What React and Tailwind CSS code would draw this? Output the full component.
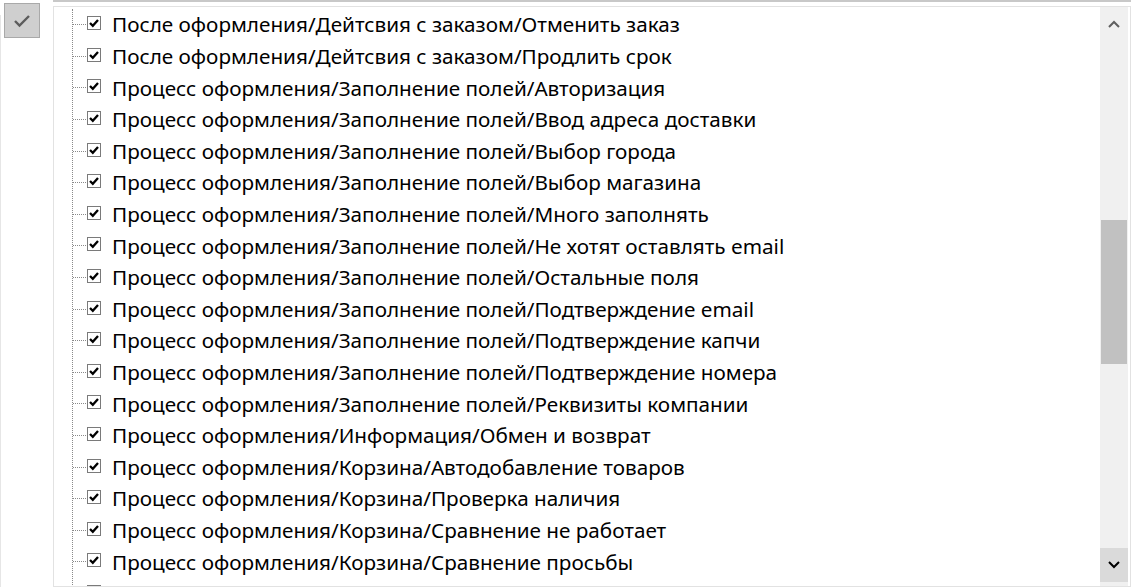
import React from "react";

const rows = [
  "После оформления/Дейтсвия с заказом/Отменить заказ",
  "После оформления/Дейтсвия с заказом/Продлить срок",
  "Процесс оформления/Заполнение полей/Авторизация",
  "Процесс оформления/Заполнение полей/Ввод адреса доставки",
  "Процесс оформления/Заполнение полей/Выбор города",
  "Процесс оформления/Заполнение полей/Выбор магазина",
  "Процесс оформления/Заполнение полей/Много заполнять",
  "Процесс оформления/Заполнение полей/Не хотят оставлять email",
  "Процесс оформления/Заполнение полей/Остальные поля",
  "Процесс оформления/Заполнение полей/Подтверждение email",
  "Процесс оформления/Заполнение полей/Подтверждение капчи",
  "Процесс оформления/Заполнение полей/Подтверждение номера",
  "Процесс оформления/Заполнение полей/Реквизиты компании",
  "Процесс оформления/Информация/Обмен и возврат",
  "Процесс оформления/Корзина/Автодобавление товаров",
  "Процесс оформления/Корзина/Проверка наличия",
  "Процесс оформления/Корзина/Сравнение не работает",
  "Процесс оформления/Корзина/Сравнение просьбы",
  "",
];

const CheckBox = ({ checked }) => (
  <div className="w-[14px] h-[14px] border border-[#7a7a7a] bg-white flex items-center justify-center shrink-0">
    {checked && (
      <svg width="10" height="10" viewBox="0 0 10 10">
        <path d="M1 5 L3.8 7.8 L9 2" fill="none" stroke="#000" strokeWidth="2.3" />
      </svg>
    )}
  </div>
);

const Row = ({ text, checked }) => (
  <div className="h-[31.6px] flex items-center shrink-0">
    <div className="w-[13px] border-t border-dotted border-[#8a8a8a] shrink-0" />
    <div className="ml-[1px] -mt-[3px]">
      <CheckBox checked={checked} />
    </div>
    <span className="ml-[11px] whitespace-nowrap text-[20.7px] text-black leading-none">{text}</span>
  </div>
);

export default function App() {
  return (
    <div
      className="w-[1140px] h-[587px] overflow-hidden bg-white flex"
      style={{ fontFamily: '"Noto Sans", "Liberation Sans", sans-serif' }}
    >
      {/* left toolbar */}
      <div className="w-[53px] shrink-0 flex">
        <div className="w-[1px] mt-[15px] bg-[#e6e6e6]" />
        <div className="ml-[3px] mt-[3px] w-[36px] h-[35px] bg-[#cfcfcf] border border-[#a9a9a9] flex items-center justify-center">
          <svg width="18" height="14" viewBox="0 0 18 14">
            <path d="M2 7 L6.5 11.5 L16 2" fill="none" stroke="#5c5c5c" strokeWidth="2.4" />
          </svg>
        </div>
      </div>

      {/* main panel */}
      <div className="w-[1078px] shrink-0 flex flex-col">
        <div className="h-[2px] bg-[#c8c8c8] shrink-0" />
        <div className="h-[4px] shrink-0" />
        <div className="h-[590px] border border-[#e2e2e2] flex overflow-hidden">
          <div className="flex-1 overflow-hidden">
            <div className="mt-[2px] ml-[18px] border-l border-dotted border-[#8a8a8a] flex flex-col">
              {rows.map((r, i) => (
                <Row key={i} text={r} checked={i < 18} />
              ))}
            </div>
          </div>

          {/* scrollbar */}
          <div className="w-[28px] bg-[#f0f0f0] flex flex-col shrink-0 mr-[2px]">
            <div className="h-[33px] flex items-center justify-center shrink-0">
              <svg width="12" height="8" viewBox="0 0 12 8">
                <path d="M1 7 L6 2 L11 7" fill="none" stroke="#606060" strokeWidth="2" />
              </svg>
            </div>
            <div className="flex-1">
              <div className="mt-[180px] mx-[1px] h-[144px] bg-[#c1c1c1]" />
            </div>
            <div className="h-[34px] bg-[#dadada] flex items-center justify-center shrink-0 mb-[4px]">
              <svg width="12" height="8" viewBox="0 0 12 8">
                <path d="M1 1 L6 6 L11 1" fill="none" stroke="#000" strokeWidth="2" />
              </svg>
            </div>
          </div>
        </div>
      </div>
    </div>
  );
}
